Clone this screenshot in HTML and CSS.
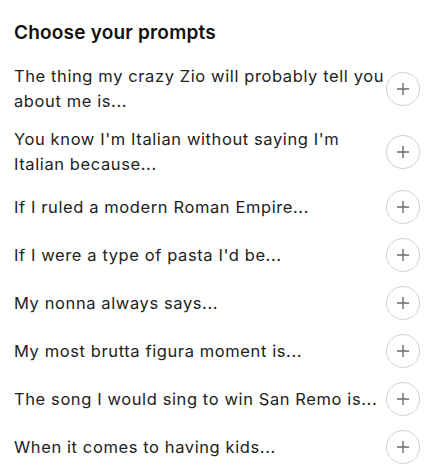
FILE: index.html
```html
<!DOCTYPE html>
<html lang="en">
<head>
    <meta charset="UTF-8">
    <meta name="viewport" content="width=device-width, initial-scale=1.0">
    <title>Choose your prompts</title>
    <link rel="stylesheet" href="styles.css">
</head>
<body>
    <div class="container">
        <h1>Choose your prompts</h1>
        <ul class="prompts">
            <li class="prompt">
                <span class="text">The thing my crazy Zio will probably tell you about me is...</span>
                <button type="button" class="add"><svg viewBox="0 0 16 16"><path d="M8 2v12M2 8h12"/></svg></button>
            </li>
            <li class="prompt">
                <span class="text">You know I'm Italian without saying I'm Italian because...</span>
                <button type="button" class="add"><svg viewBox="0 0 16 16"><path d="M8 2v12M2 8h12"/></svg></button>
            </li>
            <li class="prompt">
                <span class="text">If I ruled a modern Roman Empire...</span>
                <button type="button" class="add"><svg viewBox="0 0 16 16"><path d="M8 2v12M2 8h12"/></svg></button>
            </li>
            <li class="prompt">
                <span class="text">If I were a type of pasta I'd be...</span>
                <button type="button" class="add"><svg viewBox="0 0 16 16"><path d="M8 2v12M2 8h12"/></svg></button>
            </li>
            <li class="prompt">
                <span class="text">My nonna always says...</span>
                <button type="button" class="add"><svg viewBox="0 0 16 16"><path d="M8 2v12M2 8h12"/></svg></button>
            </li>
            <li class="prompt">
                <span class="text">My most brutta figura moment is...</span>
                <button type="button" class="add"><svg viewBox="0 0 16 16"><path d="M8 2v12M2 8h12"/></svg></button>
            </li>
            <li class="prompt">
                <span class="text">The song I would sing to win San Remo is...</span>
                <button type="button" class="add"><svg viewBox="0 0 16 16"><path d="M8 2v12M2 8h12"/></svg></button>
            </li>
            <li class="prompt">
                <span class="text">When it comes to having kids...</span>
                <button type="button" class="add"><svg viewBox="0 0 16 16"><path d="M8 2v12M2 8h12"/></svg></button>
            </li>
        </ul>
    </div>
</body>
</html>
```

FILE: styles.css
```css
/* Prompt picker */
body {
    font-family: Inter, "Noto Sans", sans-serif;
    background-color: #fff;
    color: #1a1a1a;
    margin: 0;
}

.container {
    padding: 21px 14px 14px;
}

h1 {
    font-size: 19px;
    font-weight: 600;
    line-height: 24px;
    letter-spacing: 0.2px;
    margin: 0 0 19px;
    color: #111;
}

.prompts {
    list-style: none;
    margin: 0;
    padding: 0;
    display: flex;
    flex-direction: column;
    gap: 14px;
}

.prompt {
    display: flex;
    align-items: center;
}

.text {
    flex: 0 0 372px;
    font-size: 16.5px;
    line-height: 24.5px;
    letter-spacing: 0.6px;
    color: #222;
}

.add {
    flex: 0 0 34px;
    width: 34px;
    height: 34px;
    padding: 0;
    border: 1px solid #cfcfcf;
    border-radius: 50%;
    background: #fff;
    display: flex;
    align-items: center;
    justify-content: center;
    cursor: pointer;
}

.add svg {
    width: 16px;
    height: 16px;
    fill: none;
    stroke: #6b6b6b;
    stroke-width: 1.4;
}
```
